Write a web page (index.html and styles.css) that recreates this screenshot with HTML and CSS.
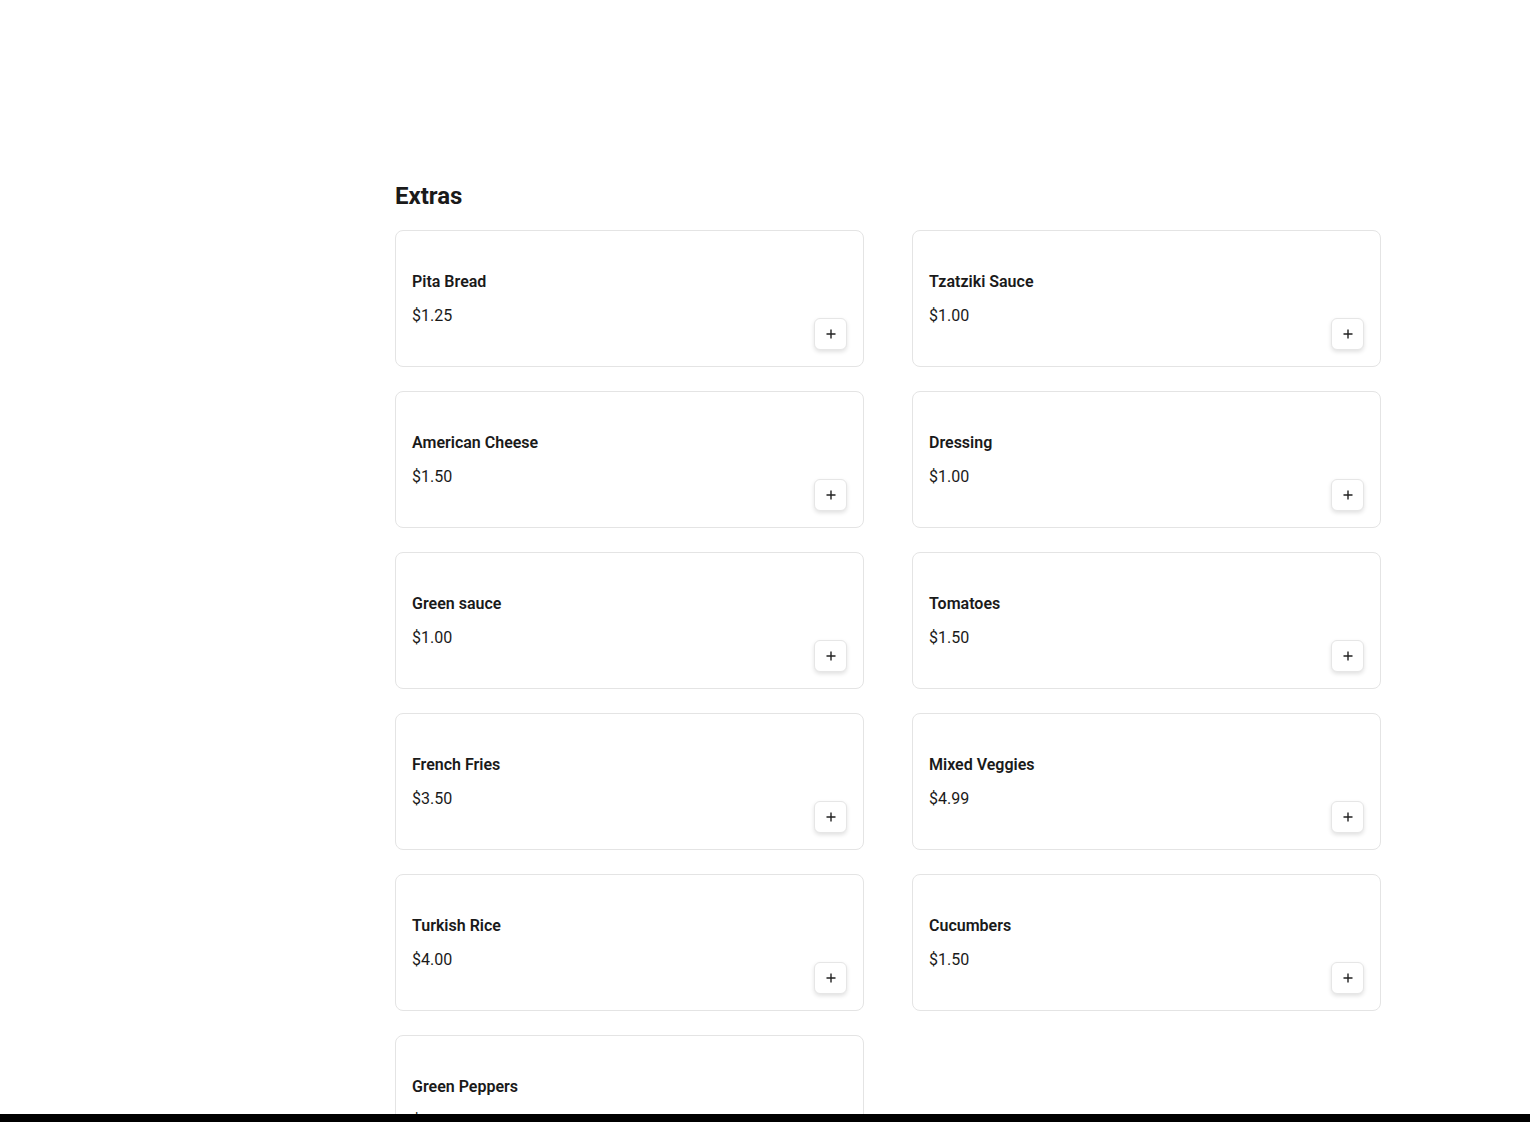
FILE: index.html
```html
<!DOCTYPE html>
<html lang="en">
<head>
<meta charset="utf-8">
<title>Extras</title>
<link rel="stylesheet" href="styles.css">
</head>
<body>
<main class="page">
  <section class="section">
    <h2 class="section-title">Extras</h2>
    <div class="grid">
      <div class="card"><div class="info"><div class="name">Pita Bread</div><div class="price">$1.25</div></div><button class="add" aria-label="Add"><svg width="12" height="12" viewBox="0 0 12 12"><path d="M6 1.5v9M1.5 6h9" stroke="#222" stroke-width="1.4" fill="none"/></svg></button></div>
      <div class="card"><div class="info"><div class="name">Tzatziki Sauce</div><div class="price">$1.00</div></div><button class="add" aria-label="Add"><svg width="12" height="12" viewBox="0 0 12 12"><path d="M6 1.5v9M1.5 6h9" stroke="#222" stroke-width="1.4" fill="none"/></svg></button></div>
      <div class="card"><div class="info"><div class="name">American Cheese</div><div class="price">$1.50</div></div><button class="add" aria-label="Add"><svg width="12" height="12" viewBox="0 0 12 12"><path d="M6 1.5v9M1.5 6h9" stroke="#222" stroke-width="1.4" fill="none"/></svg></button></div>
      <div class="card"><div class="info"><div class="name">Dressing</div><div class="price">$1.00</div></div><button class="add" aria-label="Add"><svg width="12" height="12" viewBox="0 0 12 12"><path d="M6 1.5v9M1.5 6h9" stroke="#222" stroke-width="1.4" fill="none"/></svg></button></div>
      <div class="card"><div class="info"><div class="name">Green sauce</div><div class="price">$1.00</div></div><button class="add" aria-label="Add"><svg width="12" height="12" viewBox="0 0 12 12"><path d="M6 1.5v9M1.5 6h9" stroke="#222" stroke-width="1.4" fill="none"/></svg></button></div>
      <div class="card"><div class="info"><div class="name">Tomatoes</div><div class="price">$1.50</div></div><button class="add" aria-label="Add"><svg width="12" height="12" viewBox="0 0 12 12"><path d="M6 1.5v9M1.5 6h9" stroke="#222" stroke-width="1.4" fill="none"/></svg></button></div>
      <div class="card"><div class="info"><div class="name">French Fries</div><div class="price">$3.50</div></div><button class="add" aria-label="Add"><svg width="12" height="12" viewBox="0 0 12 12"><path d="M6 1.5v9M1.5 6h9" stroke="#222" stroke-width="1.4" fill="none"/></svg></button></div>
      <div class="card"><div class="info"><div class="name">Mixed Veggies</div><div class="price">$4.99</div></div><button class="add" aria-label="Add"><svg width="12" height="12" viewBox="0 0 12 12"><path d="M6 1.5v9M1.5 6h9" stroke="#222" stroke-width="1.4" fill="none"/></svg></button></div>
      <div class="card"><div class="info"><div class="name">Turkish Rice</div><div class="price">$4.00</div></div><button class="add" aria-label="Add"><svg width="12" height="12" viewBox="0 0 12 12"><path d="M6 1.5v9M1.5 6h9" stroke="#222" stroke-width="1.4" fill="none"/></svg></button></div>
      <div class="card"><div class="info"><div class="name">Cucumbers</div><div class="price">$1.50</div></div><button class="add" aria-label="Add"><svg width="12" height="12" viewBox="0 0 12 12"><path d="M6 1.5v9M1.5 6h9" stroke="#222" stroke-width="1.4" fill="none"/></svg></button></div>
      <div class="card"><div class="info"><div class="name">Green Peppers</div><div class="price">$1.50</div></div><button class="add" aria-label="Add"><svg width="12" height="12" viewBox="0 0 12 12"><path d="M6 1.5v9M1.5 6h9" stroke="#222" stroke-width="1.4" fill="none"/></svg></button></div>
    </div>
  </section>
</main>
<div class="bottom-bar"></div>
</body>
</html>
```
FILE: styles.css
```css
* { box-sizing: border-box; }
html, body { margin: 0; padding: 0; background: #fff; }
body {
  font-family: Roboto, "Liberation Sans", Arial, sans-serif;
  color: #1a1a1a;
}
.page {
  width: 986px;
  margin: 0 auto;
  padding-top: 178px;
  padding-bottom: 40px;
  position: relative;
  left: 123px;
}
.section-title {
  margin: 0 0 16px;
  font-size: 24px;
  line-height: 36px;
  font-weight: 700;
  color: #1a1a1a;
}
.grid {
  display: grid;
  grid-template-columns: 1fr 1fr;
  column-gap: 48px;
  row-gap: 24px;
}
.card {
  height: 137px;
  border: 1px solid #e4e4e4;
  border-radius: 8px;
  padding: 16px;
  display: flex;
  justify-content: space-between;
  align-items: flex-end;
  background: #fff;
}
.info {
  align-self: flex-start;
  padding-top: 23px;
  display: flex;
  flex-direction: column;
  gap: 10px;
}
.name {
  font-size: 16px;
  line-height: 24px;
  font-weight: 600;
}
.price {
  font-size: 16px;
  line-height: 24px;
  font-weight: 400;
}
.add {
  width: 33px;
  height: 32px;
  padding: 0;
  border: 1px solid #e6e6e6;
  border-radius: 6px;
  background: #fff;
  box-shadow: 0 2px 4px rgba(0,0,0,0.12);
  display: flex;
  align-items: center;
  justify-content: center;
  cursor: pointer;
}
.bottom-bar {
  position: fixed;
  left: 0;
  right: 0;
  bottom: 0;
  height: 8px;
  background: #000;
}
```
